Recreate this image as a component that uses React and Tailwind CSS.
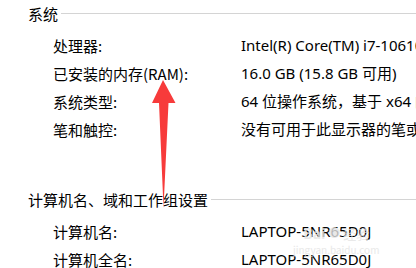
import React from "react";

const font = { fontFamily: '"Noto Sans CJK SC", "Noto Sans", sans-serif' };

function Row({ label, value }) {
  return (
    <div className="flex h-[28px] items-center whitespace-nowrap">
      <div className="w-[241px] shrink-0 pl-[53px]">{label}</div>
      <div className="shrink-0 font-['Segoe_UI','Noto_Sans','Noto_Sans_CJK_SC',sans-serif] text-[15px]">{value}</div>
    </div>
  );
}

function Header({ title, className = "" }) {
  return (
    <div className={`flex h-[26px] items-center pl-[28px] ${className}`}>
      <span className="shrink-0 whitespace-nowrap">{title}</span>
      <div className="ml-[3px] h-px flex-1 bg-[#d4d4d4]" />
    </div>
  );
}

export default function App() {
  return (
    <div
      className="relative h-[268px] w-[416px] overflow-hidden bg-white text-[15px] leading-none text-black"
      style={font}
    >
      <Header title="系统" />
      <div className="mt-[5px]">
        <Row label="处理器:" value="Intel(R) Core(TM) i7-10610U CPU @ 1.80GHz" />
        <Row label="已安装的内存(RAM):" value="16.0 GB (15.8 GB 可用)" />
        <Row label="系统类型:" value="64 位操作系统，基于 x64 的处理器" />
        <Row label="笔和触控:" value="没有可用于此显示器的笔或触控输入" />
      </div>

      <Header title="计算机名、域和工作组设置" className="mt-[43px]" />
      <div className="mt-[5px]">
        <Row label="计算机名:" value="LAPTOP-5NR65D0J" />
        <Row label="计算机全名:" value="LAPTOP-5NR65D0J" />
      </div>

      {/* annotation arrow */}
      <svg
        className="pointer-events-none absolute left-0 top-0"
        width="416"
        height="268"
        viewBox="0 0 416 268"
      >
        <polygon points="163,80 175.5,103 168.5,103 163.5,208 159,103 152,103" fill="#f73b3b" />
      </svg>

      {/* watermark */}
      <div className="pointer-events-none absolute left-[293px] top-[226px] flex flex-col items-center text-[#e4e4e4] opacity-80">
        <div className="flex items-center gap-[3px] text-[14px] font-bold leading-none">
          <span>Bai</span>
          <span className="text-[12px]">●</span>
          <span className="text-[13px] font-normal">经验</span>
        </div>
        <div className="mt-[5px] text-[10px] leading-none">jingyan.baidu.com</div>
      </div>
    </div>
  );
}
